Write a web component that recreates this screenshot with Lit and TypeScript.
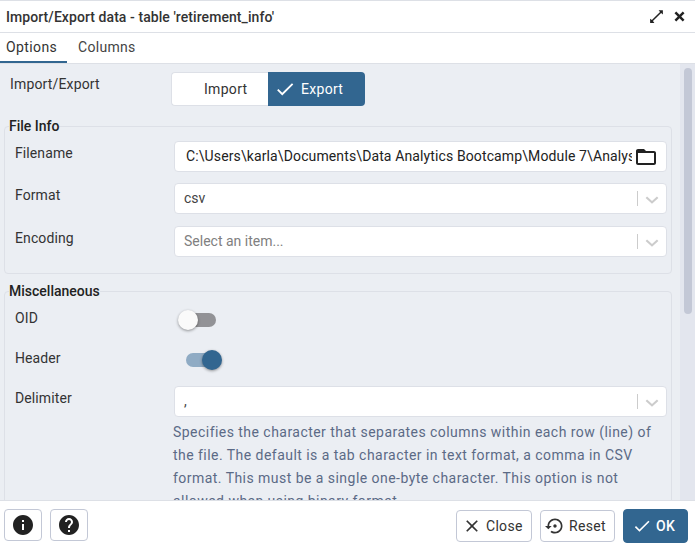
import { css, html, LitElement, svg } from 'lit';
import { customElement } from 'lit/decorators.js';

const CHECK = svg`<path d="M9 16.2 4.8 12l-1.4 1.4L9 19 21 7l-1.4-1.4L9 16.2z"/>`;
const CROSS = svg`<path d="M19 6.41 17.59 5 12 10.59 6.41 5 5 6.41 10.59 12 5 17.59 6.41 19 12 13.41 17.59 19 19 17.59 13.41 12z"/>`;
const INFO = svg`<path d="M12 2C6.48 2 2 6.48 2 12s4.48 10 10 10 10-4.48 10-10S17.52 2 12 2zm1 15h-2v-6h2v6zm0-8h-2V7h2v2z"/>`;
const HELP = svg`<path d="M12 2C6.48 2 2 6.48 2 12s4.48 10 10 10 10-4.48 10-10S17.52 2 12 2zm1 17h-2v-2h2v2zm2.07-7.75-.9.92C13.45 12.9 13 13.5 13 15h-2v-.5c0-1.1.45-2.1 1.17-2.83l1.24-1.26c.37-.36.59-.86.59-1.41 0-1.1-.9-2-2-2s-2 .9-2 2H8c0-2.21 1.79-4 4-4s4 1.79 4 4c0 .88-.36 1.68-.93 2.25z"/>`;
const RESET = svg`<path d="M14 12c0-1.1-.9-2-2-2s-2 .9-2 2 .9 2 2 2 2-.9 2-2zm-2-9c-4.97 0-9 4.03-9 9H0l4 4 4-4H5c0-3.87 3.13-7 7-7s7 3.13 7 7-3.13 7-7 7c-1.51 0-2.91-.49-4.06-1.3l-1.42 1.44C8.04 20.3 9.94 21 12 21c4.97 0 9-4.03 9-9s-4.03-9-9-9z"/>`;
const FOLDER = svg`<path d="M20 6h-8l-2-2H4c-1.1 0-1.99.9-1.99 2L2 18c0 1.1.9 2 2 2h16c1.1 0 2-.9 2-2V8c0-1.1-.9-2-2-2zm0 12H4V8h16v10z"/>`;
const EXPAND = svg`<path d="M15 3h6v6l-2.5-2L7 18.5 9 21H3v-6l2.5 2L17 5.5z"/>`;
const CLOSE_BOLD = svg`<path d="M20 6.8 17.2 4 12 9.2 6.8 4 4 6.8 9.2 12 4 17.2 6.8 20l5.2-5.2 5.2 5.2 2.8-2.8-5.2-5.2z"/>`;

@customElement('app-root')
export class AppRoot extends LitElement {
  private icon(body: unknown, cls = '') {
    return html`<svg class="icon ${cls}" viewBox="0 0 24 24" fill="currentColor">${body}</svg>`;
  }

  private selectBox(value: string, placeholder = false) {
    return html`
      <div class="control select">
        <span class=${placeholder ? 'value placeholder' : 'value'}>${value}</span>
        <span class="divider"></span>
        <svg class="chevron" viewBox="0 0 20 20" fill="currentColor">
          <path d="M4.5 7.2 2.9 8.8 10 15.2l7.1-6.4-1.6-1.6L10 12.1z" />
        </svg>
      </div>
    `;
  }

  render() {
    return html`
      <div class="title-bar">
        <span class="title">Import/Export data - table 'retirement_info'</span>
        <div class="title-icons">
          ${this.icon(EXPAND, 'expand')} ${this.icon(CLOSE_BOLD, 'dismiss')}
        </div>
      </div>

      <div class="tabs">
        <div class="tab active">Options</div>
        <div class="tab">Columns</div>
      </div>

      <div class="content">
        <div class="form">
          <div class="top-row">
            <span class="top-label">Import/Export</span>
            <div class="toggle-group">
              <div class="toggle">Import</div>
              <div class="toggle on">${this.icon(CHECK)}Export</div>
            </div>
          </div>

          <fieldset class="file-info">
            <legend>File Info</legend>
            <div class="row first">
              <span class="label">Filename</span>
              <div class="control file">
                <span class="path">C:\\Users\\karla\\Documents\\Data Analytics Bootcamp\\Module 7\\Analysis</span>
                ${this.icon(FOLDER, 'folder')}
              </div>
            </div>
            <div class="row">
              <span class="label">Format</span>
              ${this.selectBox('csv')}
            </div>
            <div class="row wide">
              <span class="label">Encoding</span>
              ${this.selectBox('Select an item...', true)}
            </div>
          </fieldset>

          <fieldset class="misc">
            <legend>Miscellaneous</legend>
            <div class="switch-row">
              <span class="label">OID</span>
              <div class="switch"><span class="track"></span><span class="knob"></span></div>
            </div>
            <div class="switch-row header">
              <span class="label">Header</span>
              <div class="switch on"><span class="track"></span><span class="knob"></span></div>
            </div>
            <div class="row delimiter">
              <span class="label">Delimiter</span>
              ${this.selectBox(',')}
            </div>
            <p class="help-text">
              Specifies the character that separates columns within each row (line) of
              the file. The default is a tab character in text format, a comma in CSV
              format. This must be a single one-byte character. This option is not
              allowed when using binary format.
            </p>
          </fieldset>
        </div>

        <div class="scrollbar"><div class="thumb"></div></div>
      </div>

      <div class="footer">
        <div class="footer-group">
          <div class="square">${this.icon(INFO)}</div>
          <div class="square">${this.icon(HELP)}</div>
        </div>
        <div class="footer-group">
          <div class="btn close">${this.icon(CROSS)}Close</div>
          <div class="btn reset">${this.icon(RESET)}Reset</div>
          <div class="btn ok">${this.icon(CHECK)}OK</div>
        </div>
      </div>
    `;
  }

  static styles = css`
    :host {
      display: flex;
      flex-direction: column;
      width: 695px;
      height: 551px;
      overflow: hidden;
      background: #fff;
      color: #222;
      font-family: Roboto, 'Liberation Sans', sans-serif;
      font-size: 14px;
      box-sizing: border-box;
      border-top: 1px solid #dde0e6;
    }

    .icon {
      display: block;
      flex: none;
      width: 24px;
      height: 24px;
    }

    /* Title */
    .title-bar {
      flex: none;
      height: 32px;
      box-sizing: border-box;
      display: flex;
      align-items: center;
      justify-content: space-between;
      padding: 0 8px 0 6px;
      border-bottom: 1px solid #dde0e6;
    }

    .title {
      font-weight: 500;
      color: #333;
      letter-spacing: 0.07px;
    }

    .title-icons {
      display: flex;
      align-items: center;
      gap: 7px;
    }

    .expand {
      width: 17px;
      height: 17px;
    }

    .dismiss {
      width: 15px;
      height: 15px;
    }

    /* Tabs */
    .tabs {
      flex: none;
      height: 31px;
      box-sizing: border-box;
      display: flex;
      border-bottom: 1px solid #dde0e6;
    }

    .tab {
      width: 67px;
      box-sizing: border-box;
      padding: 6px 0 0 6px;
      color: #444;
      letter-spacing: 0.4px;
    }

    .tab + .tab {
      width: 78px;
      padding-left: 11px;
      letter-spacing: 0.3px;
    }

    .tab.active {
      color: #333;
      border-bottom: 2px solid #326690;
      height: 30px;
    }

    /* Scrolling content */
    .content {
      flex: 1;
      min-height: 0;
      display: flex;
      overflow: hidden;
      background: #ebeef3;
    }

    .form {
      flex: none;
      width: 680px;
      box-sizing: border-box;
      padding: 8px 8px 0 4px;
    }

    .scrollbar {
      flex: 1;
      background: #e3e6ee;
      padding: 4px 3px 0 4px;
    }

    .thumb {
      height: 246px;
      border-radius: 4px;
      background: #c3c8d6;
    }

    .top-row {
      display: flex;
      height: 34px;
      padding-left: 6px;
    }

    .top-label {
      width: 161px;
      padding-top: 4px;
      color: #333;
      letter-spacing: 0.15px;
    }

    .toggle-group {
      display: flex;
      width: 194px;
      height: 34px;
    }

    .toggle {
      flex: none;
      box-sizing: border-box;
      width: 97px;
      display: flex;
      align-items: center;
      gap: 5px;
      padding-left: 32px;
      background: #fff;
      color: #333;
      letter-spacing: 0.3px;
      border: 1px solid #dde0e7;
      border-right: none;
      border-radius: 4px 0 0 4px;
    }

    .toggle.on {
      padding-left: 6px;
      background: #326690;
      color: #fff;
      border: none;
      border-radius: 0 4px 4px 0;
    }

    .toggle .icon {
      width: 22px;
      height: 22px;
    }

    fieldset {
      margin: 0;
      padding: 0 4px 0 10px;
      border: 1px solid #dde0e7;
      border-radius: 4px;
      min-width: 0;
    }

    legend {
      padding: 0;
      margin-left: -6px;
      font-weight: 500;
      color: #222;
      line-height: 16px;
    }

    .file-info {
      margin-top: 12px;
      padding-bottom: 16px;
    }

    .misc {
      margin-top: 9px;
      padding-bottom: 20px;
    }

    .row {
      display: flex;
      margin-top: 11px;
    }

    .row.first {
      margin-top: 7px;
    }

    .row.wide {
      margin-top: 12px;
    }

    .label {
      flex: none;
      width: 159px;
      color: #333;
      line-height: 20px;
      letter-spacing: 0.1px;
    }

    .row .label {
      padding-top: 2px;
      height: 20px;
    }

    .control {
      flex: 1;
      min-width: 0;
      height: 31px;
      display: flex;
      align-items: center;
      box-sizing: border-box;
      background: #fff;
      border: 1px solid #dde0e7;
      border-radius: 4px;
    }

    .file {
      padding: 0 8px 0 11px;
    }

    .path {
      flex: 1;
      min-width: 0;
      overflow: hidden;
      white-space: nowrap;
      color: #222;
      letter-spacing: 0.12px;
      margin-right: 2px;
      padding-bottom: 2px;
    }

    .folder {
      color: #222;
    }

    .select {
      padding: 0 5px 0 9px;
    }

    .value {
      flex: 1;
      color: #444;
      padding-bottom: 2px;
    }

    .placeholder {
      color: #808080;
    }

    .divider {
      width: 1px;
      height: 15px;
      background: #ccc;
      margin-right: 5px;
    }

    .chevron {
      width: 18px;
      height: 18px;
      color: #ccc;
    }

    /* Switches */
    .switch-row {
      display: flex;
      align-items: center;
      height: 22px;
      margin-top: 8px;
    }

    .switch-row.header {
      margin-top: 18px;
    }

    .switch {
      position: relative;
      width: 36px;
      height: 22px;
      margin-left: 1px;
    }

    .track {
      position: absolute;
      left: 11px;
      top: 6px;
      width: 30px;
      height: 14px;
      border-radius: 7px;
      background: #929296;
    }

    .knob {
      position: absolute;
      left: 3px;
      top: 3px;
      width: 20px;
      height: 20px;
      border-radius: 50%;
      background: #fafafa;
      box-shadow: 0 1px 3px rgba(0, 0, 0, 0.4);
    }

    .switch.on .track {
      background: #8fabc4;
    }

    .switch.on .knob {
      left: 27px;
      background: #326690;
    }

    .delimiter {
      margin-top: 17px;
    }

    .help-text {
      margin: 4px 0 0 158px;
      padding-right: 4px;
      color: #5b6a86;
      line-height: 23px;
      letter-spacing: 0.46px;
    }

    /* Footer */
    .footer {
      flex: none;
      height: 51px;
      box-sizing: border-box;
      display: flex;
      align-items: flex-start;
      justify-content: space-between;
      padding: 8px 7px 0 4px;
      border-top: 1px solid #dde0e6;
      background: #fff;
    }

    .footer-group {
      display: flex;
      gap: 8px;
      align-items: flex-start;
    }

    .square {
      width: 38px;
      height: 32px;
      box-sizing: border-box;
      display: flex;
      align-items: center;
      justify-content: center;
      border: 1px solid #c3c8d6;
      border-radius: 4px;
      color: #222;
    }

    .btn {
      height: 32px;
      margin-top: 1px;
      box-sizing: border-box;
      display: flex;
      align-items: center;
      gap: 4px;
      border: 1px solid #c3c8d6;
      border-radius: 4px;
      color: #333;
      letter-spacing: 0.3px;
    }

    .btn .icon {
      width: 20px;
      height: 20px;
    }

    .close {
      width: 76px;
      padding-left: 5px;
    }

    .reset {
      width: 75px;
      padding-left: 4px;
    }

    .ok {
      width: 65px;
      height: 34px;
      margin-top: 0;
      padding-left: 8px;
      background: #326690;
      border-color: #326690;
      color: #fff;
      font-weight: 500;
    }
  `;
}
